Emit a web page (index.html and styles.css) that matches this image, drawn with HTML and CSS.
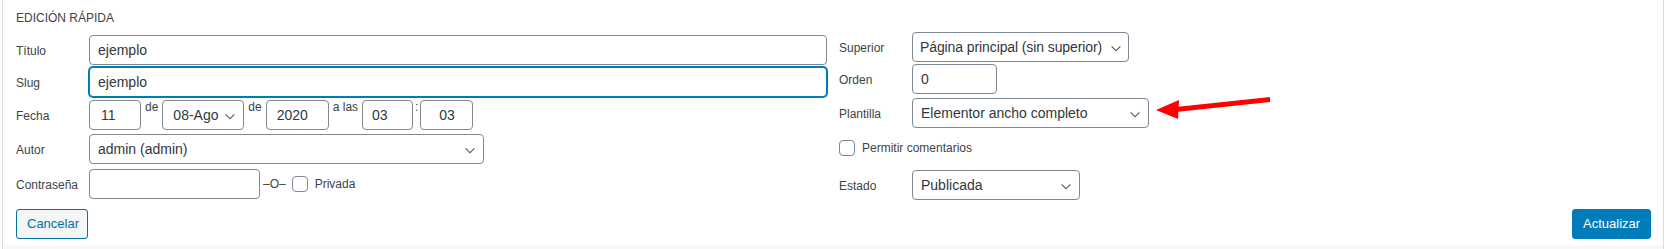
FILE: index.html
```html
<!DOCTYPE html>
<html lang="es">
<head>
    <meta charset="utf-8">
    <title>Edición rápida</title>
    <link rel="stylesheet" href="styles.css">
</head>
<body>
    <div class="list">
        <form class="quick-edit">
            <h4 class="legend">EDICIÓN RÁPIDA</h4>

            <div class="cols">
                <div class="col col-left">
                    <div class="field">
                        <span class="title">Título</span>
                        <input type="text" class="text wide" value="ejemplo">
                    </div>
                    <div class="field">
                        <span class="title">Slug</span>
                        <input type="text" class="text wide focused" value="ejemplo">
                    </div>
                    <div class="field field-date">
                        <span class="title">Fecha</span>
                        <input type="text" class="text day" value="11">
                        <span class="sep">de</span>
                        <select class="month">
                            <option>08-Ago</option>
                        </select>
                        <span class="sep">de</span>
                        <input type="text" class="text year" value="2020">
                        <span class="sep">a las</span>
                        <input type="text" class="text hour" value="03">
                        <span class="sep colon">:</span>
                        <input type="text" class="text minute" value="03">
                    </div>
                    <div class="field">
                        <span class="title">Autor</span>
                        <select class="author">
                            <option>admin (admin)</option>
                        </select>
                    </div>
                    <div class="field">
                        <span class="title">Contraseña</span>
                        <input type="text" class="text password" value="">
                        <span class="or">&ndash;O&ndash;</span>
                        <span class="checkbox"></span>
                        <span class="check-label">Privada</span>
                    </div>
                </div>

                <div class="col col-right">
                    <div class="field">
                        <span class="title">Superior</span>
                        <select class="parent">
                            <option>Página principal (sin superior)</option>
                        </select>
                    </div>
                    <div class="field">
                        <span class="title">Orden</span>
                        <input type="text" class="text order" value="0">
                    </div>
                    <div class="field">
                        <span class="title">Plantilla</span>
                        <select class="template">
                            <option>Elementor ancho completo</option>
                        </select>
                    </div>
                    <div class="field">
                        <span class="checkbox"></span>
                        <span class="check-label">Permitir comentarios</span>
                    </div>
                    <div class="field">
                        <span class="title">Estado</span>
                        <select class="status">
                            <option>Publicada</option>
                        </select>
                    </div>
                </div>
            </div>

            <div class="actions">
                <button type="button" class="btn btn-secondary">Cancelar</button>
                <button type="button" class="btn btn-primary">Actualizar</button>
            </div>

            <!-- annotation arrow pointing at the template select -->
            <svg class="arrow" width="125" height="32" viewBox="0 0 125 32">
                <polygon points="26,15 26,20 120,10 120,5" fill="#ff0000"/>
                <polygon points="6,18 29,8 28,27" fill="#ff0000"/>
            </svg>
        </form>
        <div class="next-row"></div>
    </div>
</body>
</html>
```

FILE: styles.css
```css
:root {
    --text-color: #32373c;
    --label-color: #3c434a;
    --border-color: #7e8993;
    --blue: #007cba;
    --frame-color: #dcdcde;
}

* {
    margin: 0;
    padding: 0;
    box-sizing: border-box;
}

body {
    font-family: 'Liberation Sans', Arial, sans-serif;
    background-color: #fff;
    color: var(--text-color);
}

.list {
    margin-left: 2px;
    width: 1662px;
    height: 249px;
    border-left: 1px solid var(--frame-color);
    border-right: 1px solid var(--frame-color);
    display: flex;
    flex-direction: column;
}

.quick-edit {
    position: relative;
    height: 245px;
    padding: 9px 12px 0 13px;
    background-color: #fff;
}

.next-row {
    flex: 1;
    background-color: #f6f7f7;
}

.legend {
    font-size: 12px;
    line-height: 18px;
    font-weight: normal;
    color: var(--label-color);
}

.cols {
    display: flex;
    gap: 12px;
    margin-top: 5px;
}

.col {
    display: grid;
    align-items: start;
}

.col-left {
    width: 811px;
    padding-top: 3px;
    grid-template-rows: 32px 33px 34px 35px 30px;
}

.col-right {
    flex: 1;
    grid-template-rows: 32px 34px 35px 37px 30px;
}

.field {
    display: flex;
    align-items: center;
    height: 30px;
    font-size: 12px;
    color: var(--label-color);
}

.field .title {
    width: 73px;
    flex: none;
    padding-top: 1px;
}

.text,
select {
    height: 30px;
    border: 1px solid var(--border-color);
    border-radius: 4px;
    background-color: #fff;
    font-family: inherit;
    font-size: 14px;
    color: var(--text-color);
    padding: 0 8px;
    outline: none;
}

select {
    -webkit-appearance: none;
    appearance: none;
    padding: 0 24px 0 8px;
    background: #fff url("data:image/svg+xml;charset=US-ASCII,%3Csvg%20width%3D%2220%22%20height%3D%2220%22%20xmlns%3D%22http%3A%2F%2Fwww.w3.org%2F2000%2Fsvg%22%3E%3Cpath%20d%3D%22M5%207.5l5%205%205-5%201%201-6%206-6-6%201-1z%22%20fill%3D%22%23555%22%2F%3E%3C%2Fsvg%3E") no-repeat right 5px top 55%;
    background-size: 16px 16px;
}

.wide {
    flex: 1;
}

.focused {
    border-color: var(--blue);
    box-shadow: 0 0 0 1px var(--blue);
}

/* date row */
.field-date {
    align-items: flex-start;
}

.field-date .title {
    align-self: center;
}

.sep {
    line-height: 14px;
    padding: 0 4px;
}

.sep.colon {
    padding: 0 2px;
}

.day { width: 52px; padding-left: 11px; }
.month { width: 82px; padding-left: 10px; }
.year { width: 63px; padding-left: 10px; }
.hour { width: 51px; padding-left: 9px; }
.minute { width: 53px; text-align: center; }

.author { width: 395px; }
.password { width: 171px; }

.or {
    margin-left: 3px;
}

.checkbox {
    width: 16px;
    height: 16px;
    border: 1px solid var(--border-color);
    border-radius: 4px;
    background-color: #fff;
    flex: none;
}

.or + .checkbox {
    margin-left: 6px;
}

.check-label {
    margin-left: 7px;
}

.parent {
    width: 217px;
    padding-left: 7px;
    padding-right: 18px;
    letter-spacing: -0.1px;
    background-position: right 4px top 55%;
}
.order { width: 85px; }
.template { width: 237px; }
.status { width: 168px; }

/* buttons */
.actions {
    display: flex;
    justify-content: space-between;
    margin-top: 9px;
}

.btn {
    min-height: 30px;
    padding: 0 10px;
    border-radius: 3px;
    font-family: inherit;
    font-size: 13px;
    line-height: 28px;
    cursor: pointer;
}

.btn-secondary {
    width: 72px;
    color: #0071a1;
    border: 1px solid #0071a1;
    background-color: #f3f5f6;
}

.btn-primary {
    width: 79px;
    color: #fff;
    border: 1px solid var(--blue);
    background-color: var(--blue);
}

.arrow {
    position: absolute;
    left: 1147px;
    top: 92px;
}
```
